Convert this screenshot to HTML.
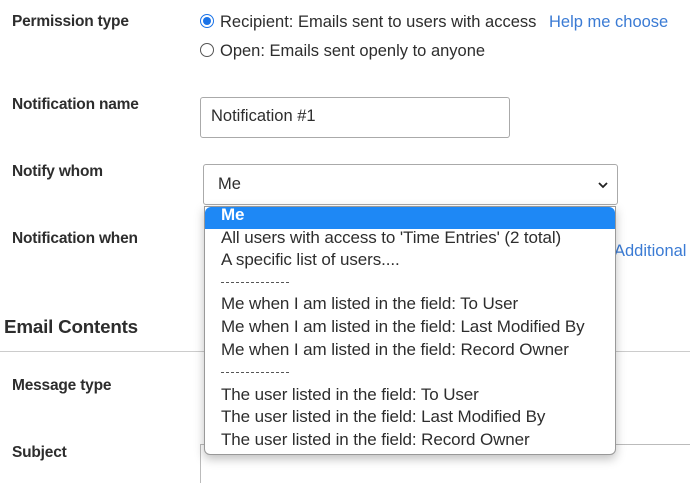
<!DOCTYPE html><html><head><style>
html,body{margin:0;width:690px;height:483px;overflow:hidden}
body{background:#fff;font-family:"Liberation Sans",sans-serif;color:#2d2d2d;position:relative}
.a{position:absolute;white-space:nowrap}
.l{font-weight:bold;font-size:15.5px;left:12px;letter-spacing:-0.2px}
.t{font-size:16.5px}
.o{position:absolute;left:16px;font-size:17px;letter-spacing:-0.1px;white-space:nowrap}
.d{position:absolute;left:16px;width:68px;border-top:1px dashed #555}
</style></head><body>
<div class="a l" style="top:13px">Permission type</div>
<div class="a" style="left:200px;top:14px;width:14px;height:14px;border-radius:50%;border:1px solid #1a73e8;box-sizing:border-box;background:#fff"><div style="position:absolute;left:2px;top:2px;width:8px;height:8px;border-radius:50%;background:#1a73e8"></div></div>
<div class="a t" style="left:220px;top:13px">Recipient: Emails sent to users with access</div>
<div class="a t" style="left:549px;top:13px;color:#3b7bd4">Help me choose</div>
<div class="a" style="left:200px;top:43px;width:14px;height:14px;border-radius:50%;border:1px solid #555;box-sizing:border-box"></div>
<div class="a t" style="left:220px;top:42px">Open: Emails sent openly to anyone</div>
<div class="a l" style="top:96px">Notification name</div>
<div class="a" style="left:200px;top:97px;width:310px;height:41px;border:1px solid #aaa;border-radius:3px;box-sizing:border-box"></div>
<div class="a t" style="left:211px;top:107px">Notification #1</div>
<div class="a l" style="top:163px">Notify whom</div>
<div class="a" style="left:203px;top:164px;width:415px;height:41px;border:1px solid #aaa;border-radius:3px;box-sizing:border-box"></div>
<div class="a t" style="left:218px;top:175px">Me</div>
<svg class="a" style="left:597px;top:180px" width="12" height="10"><path d="M2 3l4 4 4-4" stroke="#222" stroke-width="1.8" fill="none"/></svg>
<div class="a l" style="top:230px">Notification when</div>
<div class="a t" style="left:614px;top:242px;color:#3b7bd4">Additional</div>
<div class="a" style="left:4px;top:316px;font-weight:bold;font-size:18.8px;letter-spacing:-0.2px">Email Contents</div>
<div class="a" style="left:0;top:351px;width:690px;height:1px;background:#ccc"></div>
<div class="a l" style="top:377px">Message type</div>
<div class="a l" style="top:444px">Subject</div>
<div class="a" style="left:200px;top:444px;width:490px;height:60px;border-left:1px solid #bbb;border-top:1px solid #bbb"></div>
<div class="a" style="left:204px;top:206px;width:412px;height:249px;background:#fff;border:1px solid #999;border-radius:0 0 6px 6px;box-sizing:border-box;box-shadow:0 4px 10px rgba(0,0,0,.25);overflow:hidden">
<div style="position:absolute;left:0;top:0;width:100%;height:22px;background:#1e88f5;border-radius:6px 6px 0 0"></div>
<div class="o" style="top:-2px;color:#fff;font-weight:bold">Me</div>
<div class="o" style="top:21px">All users with access to 'Time Entries' (2 total)</div>
<div class="o" style="top:43px">A specific list of users....</div>
<div class="d" style="top:75px"></div>
<div class="o" style="top:87px">Me when I am listed in the field: To User</div>
<div class="o" style="top:110px">Me when I am listed in the field: Last Modified By</div>
<div class="o" style="top:133px">Me when I am listed in the field: Record Owner</div>
<div class="d" style="top:165px"></div>
<div class="o" style="top:178px">The user listed in the field: To User</div>
<div class="o" style="top:200px">The user listed in the field: Last Modified By</div>
<div class="o" style="top:223px">The user listed in the field: Record Owner</div>
</div>
</body></html>
